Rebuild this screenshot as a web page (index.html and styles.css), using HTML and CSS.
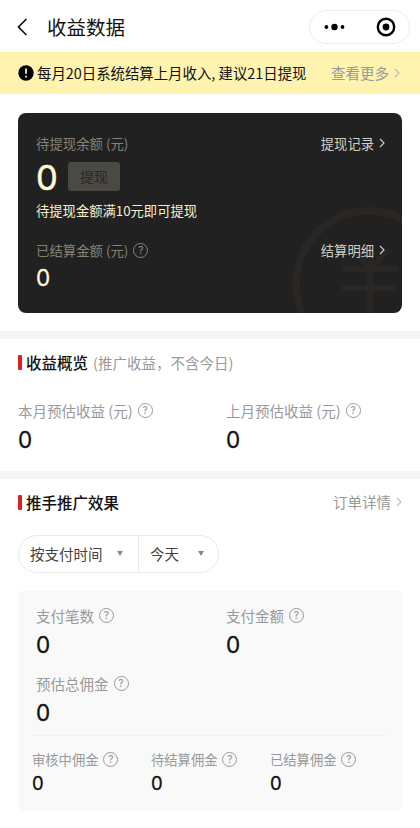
FILE: index.html
```html
<!DOCTYPE html>
<html lang="zh-CN">
<head>
<meta charset="utf-8">
<title>收益数据</title>
<link rel="stylesheet" href="styles.css">
</head>
<body>
<header class="nav">
  <svg class="back" width="11" height="18" viewBox="0 0 11 18"><path d="M9.4 1 1.5 9l7.9 8"/></svg>
  <h1>收益数据</h1>
  <div class="capsule">
    <svg width="22" height="8" viewBox="0 0 22 8"><circle cx="2.4" cy="4" r="1.9"/><circle cx="10.5" cy="4" r="3.2"/><circle cx="18.5" cy="4" r="1.9"/></svg>
    <i></i>
    <svg width="20" height="20" viewBox="0 0 20 20"><circle class="ring" cx="10" cy="10" r="8.2"/><circle cx="10" cy="10" r="3.4"/></svg>
  </div>
</header>

<div class="notice">
  <svg class="alert" width="16" height="16" viewBox="0 0 16 16"><circle cx="8" cy="8" r="7.7"/><path d="M8 3.6v5.2M8 10.7v1.7"/></svg>
  <span>每月20日系统结算上月收入, 建议21日提现</span>
  <a class="more">查看更多<svg class="chev" width="6" height="10" viewBox="0 0 6 10"><path d="m1 1 4 4-4 4"/></svg></a>
</div>

<section class="card">
  <svg class="coin" width="110" height="107" viewBox="0 0 110 107"><circle cx="77" cy="78" r="73"/><path d="M50 63h56M50 82h56M78 50v57M62 44l16 19 18-19"/></svg>
  <div class="row">
    <span class="dim">待提现余额 (元)</span>
    <a class="link">提现记录<svg class="chev" width="6" height="10" viewBox="0 0 6 10"><path d="m1 1 4 4-4 4"/></svg></a>
  </div>
  <div class="balance"><b>0</b><button>提现</button></div>
  <p class="tip">待提现金额满10元即可提现</p>
  <div class="row">
    <span class="dim">已结算金额 (元)<i class="help">?</i></span>
    <a class="link">结算明细<svg class="chev" width="6" height="10" viewBox="0 0 6 10"><path d="m1 1 4 4-4 4"/></svg></a>
  </div>
  <b class="settled">0</b>
</section>

<section class="block overview">
  <div class="title"><h2>收益概览</h2><small>(推广收益，不含今日)</small></div>
  <div class="pair">
    <div class="stat"><span>本月预估收益 (元)<i class="help">?</i></span><b>0</b></div>
    <div class="stat"><span>上月预估收益 (元)<i class="help">?</i></span><b>0</b></div>
  </div>
</section>

<section class="block effect">
  <div class="title"><h2>推手推广效果</h2><a class="more">订单详情<svg class="chev" width="6" height="10" viewBox="0 0 6 10"><path d="m1 1 4 4-4 4"/></svg></a></div>
  <div class="filters">
    <div class="filter by">按支付时间<i class="caret"></i></div>
    <div class="filter day">今天<i class="caret"></i></div>
  </div>
  <div class="panel">
    <div class="pair">
      <div class="stat"><span>支付笔数<i class="help">?</i></span><b>0</b></div>
      <div class="stat"><span>支付金额<i class="help">?</i></span><b>0</b></div>
      <div class="stat"><span>预估总佣金<i class="help">?</i></span><b>0</b></div>
    </div>
    <div class="trio">
      <div class="stat"><span>审核中佣金<i class="help">?</i></span><b>0</b></div>
      <div class="stat"><span>待结算佣金<i class="help">?</i></span><b>0</b></div>
      <div class="stat"><span>已结算佣金<i class="help">?</i></span><b>0</b></div>
    </div>
  </div>
</section>
</body>
</html>
```

FILE: styles.css
```css
* { box-sizing: border-box; }
body {
  margin: 0;
  width: 420px;
  height: 828px;
  overflow: hidden;
  background: #fff;
  color: #111;
  font-family: "Noto Sans CJK SC", sans-serif;
  font-size: 14.5px;
  white-space: nowrap;
}
h1, h2, p { margin: 0; }
i { font-style: normal; }
svg { flex: none; }
b { font-family: Inter, sans-serif; font-weight: 400; }

.nav { display: flex; align-items: center; height: 52px; padding: 2px 10px 0 17px; }
.back { fill: none; stroke: #111; stroke-width: 1.7; }
.nav h1 { margin-left: 19px; font-size: 19.5px; font-weight: 400; line-height: 28px; }
.capsule {
  display: flex;
  align-items: center;
  width: 101px;
  height: 34px;
  margin-left: auto;
  padding: 0 14px;
  border: 1px solid #ededed;
  border-radius: 17px;
}
.capsule i { width: 1px; height: 18px; margin: 0 16px 0 14px; background: #e9e9e9; }
.capsule .ring { fill: none; stroke: #000; stroke-width: 2.4; }

.notice { display: flex; align-items: center; height: 42px; padding: 0 20px 0 18px; background: #fff3b0; }
.notice span { margin-left: 3px; padding-bottom: 1px; font-size: 14.4px; }
.alert path { stroke: #fff3b0; stroke-width: 1.8; }
.more { display: flex; align-items: center; margin-left: auto; padding-bottom: 1px; color: #999; }
.chev { margin-left: 5px; fill: none; stroke: currentColor; stroke-width: 1.1; }
.more .chev { stroke: #bbb; }

.card {
  position: relative;
  height: 200px;
  margin: 18.5px 18px 0;
  padding: 20.5px 17px 0 18px;
  border-radius: 8px;
  background: #212121;
  overflow: hidden;
  font-size: 13.4px;
}
.coin { position: absolute; right: 0; bottom: 0; fill: none; stroke: #292623; stroke-width: 8; }
.coin path { stroke-width: 6; }
.row { position: relative; display: flex; justify-content: space-between; align-items: center; height: 20px; }
.dim { display: flex; align-items: center; color: #858175; }
.link { display: flex; align-items: center; color: #d0cdc2; font-size: 13.3px; }
.balance { display: flex; align-items: center; height: 46px; color: #fff8d6; }
.balance b { width: 32px; padding-top: 3px; font-size: 34.5px; font-weight: 400; line-height: 43px; -webkit-text-stroke: 0.5px; }
.balance button {
  width: 52px;
  height: 29px;
  padding: 0;
  border: 0;
  border-radius: 3px;
  background: #4b4944;
  color: #292825;
  font: 14px/27px "Noto Sans CJK SC", sans-serif;
}
.tip { height: 20px; margin: 2px 0 19px; color: #f7efca; font-size: 13.3px; line-height: 20px; }
.settled { display: block; color: #fff8e0; font-size: 22.5px; line-height: 36px; -webkit-text-stroke: 0.3px; }

.help {
  width: 15px;
  height: 15px;
  margin-left: 5px;
  border: 1px solid currentColor;
  border-radius: 50%;
  font: 500 10px/13px Inter, sans-serif;
  text-align: center;
}

.block { border-top: 8px solid #f4f4f4; }
.overview { height: 140px; margin-top: 18.5px; padding: 11px 18px 0; }
.title { display: flex; align-items: center; height: 24px; }
.title::before { content: ""; width: 4px; height: 15px; margin-right: 4px; border-radius: 1px; background: #e02020; }
.title h2 { font-size: 15.5px; font-weight: 500; }
.title small { margin-left: 5px; color: #999; font-size: 14.5px; }
.overview .pair { margin-top: 25px; }
.pair { display: grid; grid-template-columns: 208px 1fr; }
.stat span { display: flex; align-items: center; height: 22px; color: #999; }
.stat b { display: block; font-size: 22.5px; line-height: 38px; -webkit-text-stroke: 0.3px; }

.effect { padding: 11px 18px 0; }
.filters {
  display: flex;
  width: 201px;
  height: 38px;
  margin-top: 21px;
  border: 1px solid #e9e9e9;
  border-radius: 19px;
  color: #444;
}
.filter { display: flex; align-items: center; justify-content: space-between; padding-bottom: 1px; }
.by { width: 120px; padding-left: 11px; padding-right: 15px; border-right: 1px solid #e9e9e9; }
.day { flex: 1; padding-left: 11px; padding-right: 14px; }
.caret { border: 3.5px solid transparent; border-top: 5px solid #888; border-bottom: 0; }
.panel { height: 220px; margin-top: 18px; padding: 13px 14px 0; border-radius: 3px; background: #f9f9f9; }
.panel .pair { grid-template-columns: 190px 1fr; grid-auto-rows: 68px; height: 132px; padding-left: 4px; border-bottom: 1px solid #f2f2f2; }
.trio { display: grid; grid-template-columns: repeat(3, 119px); padding-top: 12px; font-size: 13.3px; }
.trio .stat b { font-size: 18.5px; line-height: 26px; }
```
